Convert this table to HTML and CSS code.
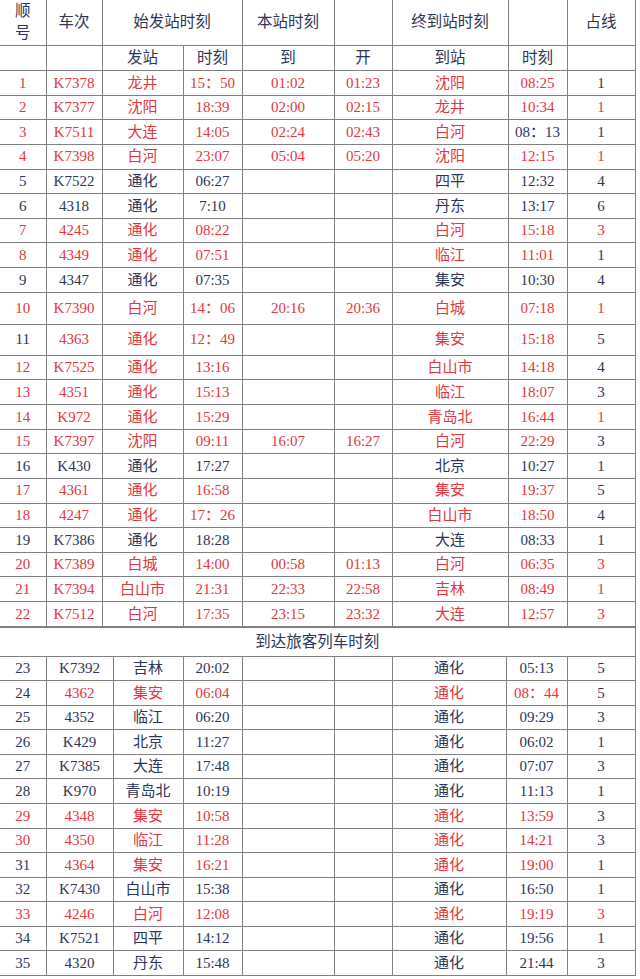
FILE: index.html
```html
<!DOCTYPE html>
<html lang="zh-CN">
<head>
<meta charset="utf-8">
<title>列车时刻表</title>
<link rel="stylesheet" href="styles.css">
</head>
<body>
<table class="tt top">
  <colgroup>
    <col class="c1"><col class="c2"><col class="c3"><col class="c4"><col class="c5"><col class="c6"><col class="c7"><col class="c8"><col class="c9">
  </colgroup>
  <tr class="h1">
    <td class="n">顺<br>号</td><td class="n">车次</td><td class="n" colspan="2">始发站时刻</td><td class="n">本站时刻</td><td></td><td class="n">终到站时刻</td><td></td><td class="n">占线</td>
  </tr>
  <tr class="h2">
    <td></td><td></td><td class="n">发站</td><td class="n">时刻</td><td class="n">到</td><td class="n">开</td><td class="n">到站</td><td class="n">时刻</td><td></td>
  </tr>
  <tr class="r"><td>1</td><td>K7378</td><td>龙井</td><td>15：50</td><td>01:02</td><td>01:23</td><td>沈阳</td><td>08:25</td><td class="n">1</td></tr>
  <tr class="r"><td>2</td><td>K7377</td><td>沈阳</td><td>18:39</td><td>02:00</td><td>02:15</td><td>龙井</td><td>10:34</td><td>1</td></tr>
  <tr class="r"><td>3</td><td>K7511</td><td>大连</td><td>14:05</td><td>02:24</td><td>02:43</td><td>白河</td><td class="n">08：13</td><td class="n">1</td></tr>
  <tr class="r"><td>4</td><td>K7398</td><td>白河</td><td>23:07</td><td>05:04</td><td>05:20</td><td>沈阳</td><td>12:15</td><td>1</td></tr>
  <tr class="b"><td>5</td><td>K7522</td><td>通化</td><td>06:27</td><td></td><td></td><td>四平</td><td>12:32</td><td>4</td></tr>
  <tr class="b"><td>6</td><td>4318</td><td>通化</td><td>7:10</td><td></td><td></td><td>丹东</td><td>13:17</td><td>6</td></tr>
  <tr class="r"><td>7</td><td>4245</td><td>通化</td><td>08:22</td><td></td><td></td><td>白河</td><td>15:18</td><td>3</td></tr>
  <tr class="r"><td>8</td><td>4349</td><td>通化</td><td>07:51</td><td></td><td></td><td>临江</td><td>11:01</td><td class="n">1</td></tr>
  <tr class="b"><td>9</td><td>4347</td><td>通化</td><td>07:35</td><td></td><td></td><td>集安</td><td>10:30</td><td>4</td></tr>
  <tr class="r tall"><td>10</td><td>K7390</td><td>白河</td><td>14：06</td><td>20:16</td><td>20:36</td><td>白城</td><td>07:18</td><td>1</td></tr>
  <tr class="r tall2"><td class="n">11</td><td>4363</td><td>通化</td><td>12：49</td><td></td><td></td><td>集安</td><td>15:18</td><td class="n">5</td></tr>
  <tr class="r"><td>12</td><td>K7525</td><td>通化</td><td>13:16</td><td></td><td></td><td>白山市</td><td>14:18</td><td class="n">4</td></tr>
  <tr class="r"><td>13</td><td>4351</td><td>通化</td><td>15:13</td><td></td><td></td><td>临江</td><td>18:07</td><td class="n">3</td></tr>
  <tr class="r"><td>14</td><td>K972</td><td>通化</td><td>15:29</td><td></td><td></td><td>青岛北</td><td>16:44</td><td>1</td></tr>
  <tr class="r"><td>15</td><td>K7397</td><td>沈阳</td><td>09:11</td><td>16:07</td><td>16:27</td><td>白河</td><td>22:29</td><td class="n">3</td></tr>
  <tr class="b"><td>16</td><td>K430</td><td>通化</td><td>17:27</td><td></td><td></td><td>北京</td><td>10:27</td><td>1</td></tr>
  <tr class="r"><td>17</td><td>4361</td><td>通化</td><td>16:58</td><td></td><td></td><td>集安</td><td>19:37</td><td class="n">5</td></tr>
  <tr class="r"><td>18</td><td>4247</td><td>通化</td><td>17：26</td><td></td><td></td><td>白山市</td><td>18:50</td><td class="n">4</td></tr>
  <tr class="b"><td>19</td><td>K7386</td><td>通化</td><td>18:28</td><td></td><td></td><td>大连</td><td>08:33</td><td>1</td></tr>
  <tr class="r"><td>20</td><td>K7389</td><td>白城</td><td>14:00</td><td>00:58</td><td>01:13</td><td>白河</td><td>06:35</td><td>3</td></tr>
  <tr class="r"><td>21</td><td>K7394</td><td>白山市</td><td>21:31</td><td>22:33</td><td>22:58</td><td>吉林</td><td>08:49</td><td>1</td></tr>
  <tr class="r"><td>22</td><td>K7512</td><td>白河</td><td>17:35</td><td>23:15</td><td>23:32</td><td>大连</td><td>12:57</td><td>3</td></tr>
</table>
<table class="tt bottom">
  <colgroup>
    <col class="d1"><col class="d2"><col class="d3"><col class="d4"><col class="d5"><col class="d6"><col class="d7"><col class="d8"><col class="d9">
  </colgroup>
  <tr class="sec"><td class="n" colspan="9">到达旅客列车时刻</td></tr>
  <tr class="b"><td>23</td><td>K7392</td><td>吉林</td><td>20:02</td><td></td><td></td><td>通化</td><td>05:13</td><td>5</td></tr>
  <tr class="r"><td class="n">24</td><td>4362</td><td>集安</td><td>06:04</td><td></td><td></td><td>通化</td><td>08：44</td><td class="n">5</td></tr>
  <tr class="b"><td>25</td><td>4352</td><td>临江</td><td>06:20</td><td></td><td></td><td>通化</td><td>09:29</td><td>3</td></tr>
  <tr class="b"><td>26</td><td>K429</td><td>北京</td><td>11:27</td><td></td><td></td><td>通化</td><td>06:02</td><td>1</td></tr>
  <tr class="b"><td>27</td><td>K7385</td><td>大连</td><td>17:48</td><td></td><td></td><td>通化</td><td>07:07</td><td>3</td></tr>
  <tr class="b"><td>28</td><td>K970</td><td>青岛北</td><td>10:19</td><td></td><td></td><td>通化</td><td>11:13</td><td>1</td></tr>
  <tr class="r"><td>29</td><td>4348</td><td>集安</td><td>10:58</td><td></td><td></td><td>通化</td><td>13:59</td><td class="n">3</td></tr>
  <tr class="r"><td>30</td><td>4350</td><td>临江</td><td>11:28</td><td></td><td></td><td>通化</td><td>14:21</td><td class="n">3</td></tr>
  <tr class="r"><td class="n">31</td><td>4364</td><td>集安</td><td>16:21</td><td></td><td></td><td>通化</td><td>19:00</td><td class="n">1</td></tr>
  <tr class="b"><td>32</td><td>K7430</td><td>白山市</td><td>15:38</td><td></td><td></td><td>通化</td><td>16:50</td><td>1</td></tr>
  <tr class="r"><td>33</td><td>4246</td><td>白河</td><td>12:08</td><td></td><td></td><td>通化</td><td>19:19</td><td>3</td></tr>
  <tr class="b"><td>34</td><td>K7521</td><td>四平</td><td>14:12</td><td></td><td></td><td>通化</td><td>19:56</td><td>1</td></tr>
  <tr class="b"><td>35</td><td>4320</td><td>丹东</td><td>15:48</td><td></td><td></td><td>通化</td><td>21:44</td><td>3</td></tr>
</table>
</body>
</html>
```

FILE: styles.css
```css
html, body {
  margin: 0;
  padding: 0;
  background: #ffffff;
}

body {
  font-family: "Liberation Serif", "Noto Sans CJK SC", serif;
  font-size: 15px;
  color: #2c3658;
}

.tt {
  border-collapse: collapse;
  table-layout: fixed;
  width: 635px;
}

.tt td {
  border: 1px solid #808080;
  padding: 0;
  text-align: center;
  vertical-align: middle;
  line-height: 1.1;
  white-space: nowrap;
}

.tt tr td:first-child {
  border-left: none;
}

.top tr:first-child td {
  border-top: none;
}

.c1 { width: 46px; }
.c2 { width: 56px; }
.c3 { width: 81px; }
.c4 { width: 59px; }
.c5 { width: 92px; }
.c6 { width: 58px; }
.c7 { width: 116px; }
.c8 { width: 59px; }
.c9 { width: 68px; }

.d1 { width: 46px; }
.d2 { width: 67px; }
.d3 { width: 70px; }
.d4 { width: 59px; }
.d5 { width: 92px; }
.d6 { width: 58px; }
.d7 { width: 114px; }
.d8 { width: 61px; }
.d9 { width: 68px; }

.h1 { height: 45px; }
.h1 td { font-size: 15.5px; line-height: 1.45; }
.h2 { height: 25px; }
.h2 td { font-size: 15.5px; }

.r, .b { height: 24.65px; }
.tall { height: 32px; }
.tall2 { height: 31px; }
.sec { height: 29px; }
.sec td { font-size: 15.5px; }
.bottom .r, .bottom .b { height: 24.55px; }

.r td { color: #e3363e; }
.b td { color: #2c3658; }
.r td.n, td.n { color: #2c3658; }
```
